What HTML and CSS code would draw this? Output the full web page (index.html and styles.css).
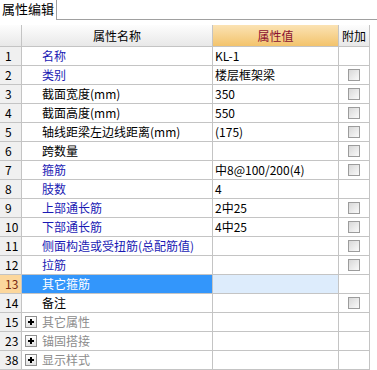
FILE: index.html
```html
<!DOCTYPE html>
<html lang="zh-CN">
  <head>
    <meta charset="UTF-8" />
    <title>属性编辑</title>
    <link rel="stylesheet" href="styles.css">
  </head>
  <body>
    <div class="tabs"><div class="tab">属性编辑</div></div>
    <div class="grid">
      <div class="hd num"></div><div class="hd name-h">属性名称</div><div class="hd val-h">属性值</div><div class="hd ext-h">附加</div>

      <div class="num">1</div><div class="name blue">名称</div><div class="val">KL-1</div><div class="ext"></div>
      <div class="num">2</div><div class="name blue">类别</div><div class="val">楼层框架梁</div><div class="ext"><span class="chk"></span></div>
      <div class="num">3</div><div class="name">截面宽度(mm)</div><div class="val">350</div><div class="ext"><span class="chk"></span></div>
      <div class="num">4</div><div class="name">截面高度(mm)</div><div class="val">550</div><div class="ext"><span class="chk"></span></div>
      <div class="num">5</div><div class="name">轴线距梁左边线距离(mm)</div><div class="val">(175)</div><div class="ext"><span class="chk"></span></div>
      <div class="num">6</div><div class="name">跨数量</div><div class="val"></div><div class="ext"><span class="chk"></span></div>
      <div class="num">7</div><div class="name blue">箍筋</div><div class="val">中8@100/200(4)</div><div class="ext"><span class="chk"></span></div>
      <div class="num">8</div><div class="name blue">肢数</div><div class="val">4</div><div class="ext"></div>
      <div class="num">9</div><div class="name blue">上部通长筋</div><div class="val">2中25</div><div class="ext"><span class="chk"></span></div>
      <div class="num">10</div><div class="name blue">下部通长筋</div><div class="val">4中25</div><div class="ext"><span class="chk"></span></div>
      <div class="num">11</div><div class="name blue">侧面构造或受扭筋(总配筋值)</div><div class="val"></div><div class="ext"><span class="chk"></span></div>
      <div class="num">12</div><div class="name blue">拉筋</div><div class="val"></div><div class="ext"><span class="chk"></span></div>
      <div class="num sel-num">13</div><div class="name sel-name">其它箍筋</div><div class="val sel-val"></div><div class="ext"></div>
      <div class="num">14</div><div class="name">备注</div><div class="val"></div><div class="ext"><span class="chk"></span></div>
      <div class="num">15</div><div class="name group"><span class="plus"></span>其它属性</div><div class="val"></div><div class="ext"></div>
      <div class="num">23</div><div class="name group"><span class="plus"></span>锚固搭接</div><div class="val"></div><div class="ext"></div>
      <div class="num">38</div><div class="name group"><span class="plus"></span>显示样式</div><div class="val"></div><div class="ext"></div>
    </div>
  </body>
</html>
```
FILE: styles.css
```css
body {
  margin: 0;
  background: #fff;
  font-family: "Noto Sans CJK SC", "DejaVu Sans", sans-serif;
  font-size: 12px;
  color: #000;
}
.tabs {
  height: 19px;
  border-bottom: 1px solid #a0a0a0;
  display: flex;
}
.tab {
  width: 57px;
  height: 20px;
  box-sizing: border-box;
  border-right: 1px solid #a0a0a0;
  background: #fff;
  font-size: 13px;
  line-height: 18px;
  padding-left: 2px;
}
.grid {
  margin-top: 5px;
  display: grid;
  grid-template-columns: 22px 191px 126px 31px;
  grid-template-rows: 22px;
  grid-auto-rows: 19px;
  width: 370px;
}
.grid > div {
  box-sizing: border-box;
  border-right: 1px solid #c4c4c4;
  border-bottom: 1px solid #c4c4c4;
  line-height: 18px;
  white-space: nowrap;
  overflow: hidden;
}
.grid > .hd {
  line-height: 21px;
  background: linear-gradient(#fdfdfd, #e8e8e8);
}
.name-h {
  text-align: center;
}
.grid > .val-h {
  background: linear-gradient(#fbe3b4, #f3c36c);
  color: #8a1030;
  text-align: center;
}
.ext-h {
  padding-left: 3px;
}
.num {
  background: #f0f0f0;
  padding-left: 5px;
}
.name {
  padding-left: 20px;
}
.blue {
  color: #1a1ab4;
}
.group {
  color: #8c8c8c;
  padding-left: 3px;
  display: flex;
  align-items: center;
}
.plus {
  position: relative;
  flex: none;
  width: 12px;
  height: 12px;
  box-sizing: border-box;
  border: 1px solid #909090;
  background: linear-gradient(#fff, #e2e2e2);
  margin-right: 5px;
}
.plus::before,
.plus::after {
  content: "";
  position: absolute;
  background: #000;
}
.plus::before {
  left: 2px;
  top: 4px;
  width: 6px;
  height: 2px;
}
.plus::after {
  left: 4px;
  top: 2px;
  width: 2px;
  height: 6px;
}
.val {
  padding-left: 2px;
}
.ext {
  display: flex;
  align-items: center;
  justify-content: center;
}
.chk {
  width: 12px;
  height: 12px;
  box-sizing: border-box;
  border: 1px solid #9c9c9c;
  background: linear-gradient(135deg, #d8d8d8, #fafafa);
}
.grid > .sel-num {
  background: #fcd79c;
  color: #7a2a10;
}
.grid > .sel-name {
  background: #3396fb;
  color: #fff;
}
.grid > .sel-val {
  background: #ddecfc;
}
```
